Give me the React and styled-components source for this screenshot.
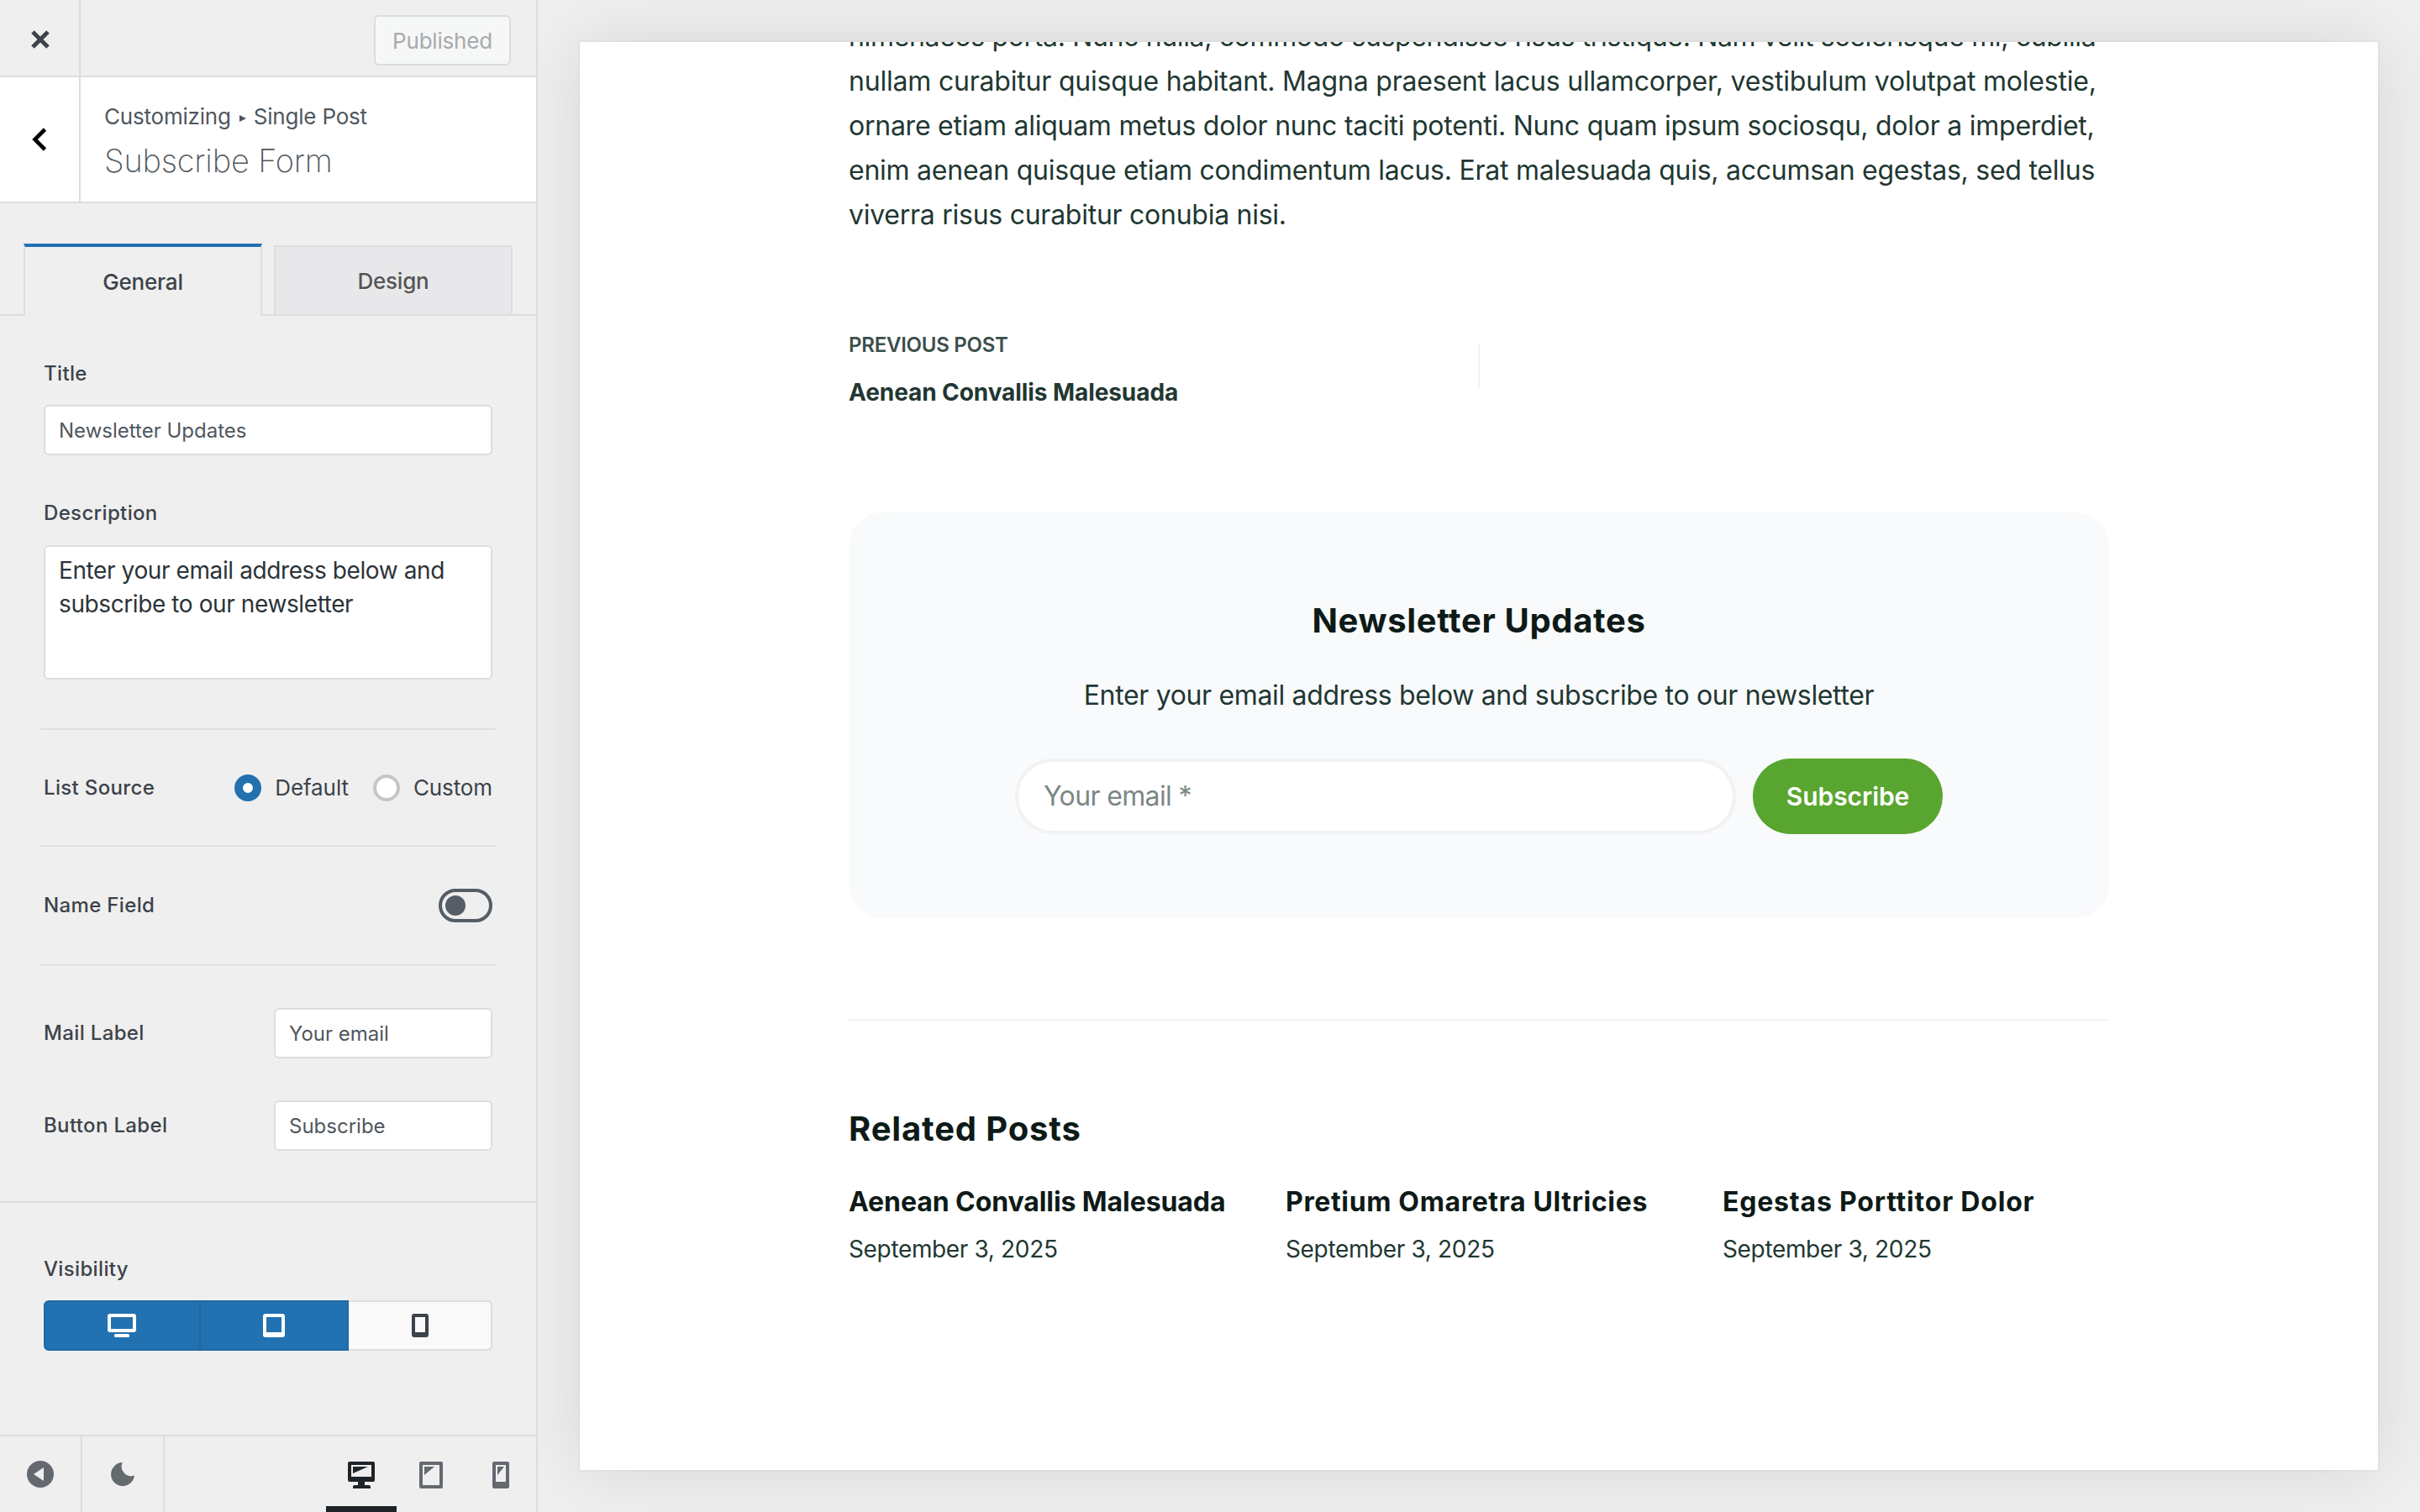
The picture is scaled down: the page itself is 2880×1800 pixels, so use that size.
import React from 'react';
import styled, { createGlobalStyle, css } from 'styled-components';

const GlobalStyle = createGlobalStyle`
  *, *::before, *::after {
    box-sizing: border-box;
  }

  body {
    margin: 0;
    background: #efefef;
    font-family: Inter, "Liberation Sans", sans-serif;
  }

  button, input, textarea {
    font-family: inherit;
  }
`;

const Page = styled.div`
  display: flex;
  width: 2880px;
  height: 1800px;
  overflow: hidden;
`;

/* ---------- Sidebar ---------- */

const Sidebar = styled.aside`
  display: flex;
  flex-direction: column;
  width: 640px;
  flex: none;
  background: #efefef;
  border-right: 2px solid #dddddd;
  position: relative; /* keeps the preview shadow underneath */
  z-index: 1;
`;

const Header = styled.div`
  display: flex;
  justify-content: space-between;
  height: 92px;
  border-bottom: 2px solid #dddddd;
`;

const IconCell = styled.button`
  display: flex;
  align-items: center;
  justify-content: center;
  width: ${(props) => props.$width || 96}px;
  padding: ${(props) => props.$padding || 0};
  border: 0;
  border-right: 2px solid #dddddd;
  background: ${(props) => props.$background || 'transparent'};
`;

const PublishedButton = styled.button`
  width: 163px;
  height: 60px;
  margin: 18px 30px 0 0;
  padding: 0;
  border: 2px solid #dcdcde;
  border-radius: 6px;
  background: #f6f7f7;
  color: #a7aaad;
  font-size: 26px;
  letter-spacing: -0.2px;
`;

const PanelHeader = styled.div`
  display: flex;
  height: 150px;
  background: #fff;
  border-bottom: 2px solid #dddddd;
`;

const PanelTitles = styled.div`
  padding: 29px 0 0 28px;
  color: #50575e;
`;

const Breadcrumb = styled.div`
  display: flex;
  align-items: center;
  font-size: 26px;
  line-height: 36px;
  letter-spacing: -0.2px;

  svg {
    margin: 4px 9px 0 10px;
  }
`;

const PanelTitle = styled.h1`
  margin: 11px 0 0;
  font-size: 38px;
  font-weight: 200;
  line-height: 46px;
  letter-spacing: -0.2px;
`;

const Tabs = styled.div`
  display: flex;
  align-items: flex-end;
  gap: 14px;
  height: 86px;
  margin-top: 48px;
  padding-left: 28px;
  border-bottom: 2px solid #dddddd;
`;

const Tab = styled.button`
  width: 284px;
  height: 82px;
  padding: 0;
  border: 2px solid #dddddd;
  border-bottom: 0;
  background: #e8e8ea;
  color: #555555;
  font-size: 26px;
  font-weight: 500;
  letter-spacing: -0.2px;

  ${(props) => props.$active && css`
    height: 86px;
    margin-bottom: -2px;
    border-top: 4px solid #2271b1;
    background: #efefef;
    color: #3c434a;
  `}
`;

const Options = styled.div`
  padding: 54px 52px 0;
`;

const Label = styled.div`
  color: #3c434a;
  font-size: 24px;
  font-weight: 500;
  line-height: 30px;
  letter-spacing: 0.35px;
`;

const Input = styled.input`
  display: block;
  width: ${(props) => props.$width || '100%'};
  height: 60px;
  margin-top: ${(props) => props.$top || 0}px;
  padding: 0 16px;
  border: 2px solid #dddddd;
  border-radius: 6px;
  background: #fff;
  color: #50575e;
  font-size: 24px;
  outline: none;
`;

const TextArea = styled.textarea`
  display: block;
  width: 100%;
  height: 160px;
  margin-top: 23px;
  padding: 8px 16px;
  border: 2px solid #dddddd;
  border-radius: 6px;
  background: #fff;
  color: #2c3338;
  font-size: 28px;
  line-height: 40px;
  letter-spacing: -0.4px;
  resize: none;
  outline: none;
`;

const Field = styled.div`
  margin-bottom: 54px;
`;

const Divider = styled.div`
  height: 2px;
  margin: 0 -4px;
  background: #e0e0e0;
`;

const FullDivider = styled(Divider)`
  margin: 60px -52px 64px;
  background: #dddddd;
`;

const Rows = styled.div`
  margin-top: 58px;
`;

const Row = styled.div`
  display: flex;
  align-items: center;
  justify-content: space-between;
  height: ${(props) => props.$height}px;
`;

const LabelFields = styled.div`
  display: grid;
  gap: 50px;
  padding-top: 50px;
`;

const Radios = styled.div`
  display: flex;
  gap: 29px;
`;

const RadioOption = styled.div`
  display: flex;
  align-items: center;
  gap: 16px;
  color: #3c434a;
  font-size: 26px;
  line-height: 32px;
  letter-spacing: -0.1px;
`;

const Radio = styled.span`
  width: 32px;
  height: 32px;
  border: ${(props) => (props.$checked ? '10px solid #2271b1' : '4px solid #c3c6c8')};
  border-radius: 50%;
  background: #fff;
`;

const Toggle = styled.div`
  width: 64px;
  height: 40px;
  padding: 4px;
  border: 4px solid #555d66;
  border-radius: 20px;

  &::after {
    content: '';
    display: block;
    width: 24px;
    height: 24px;
    border-radius: 50%;
    background: #555d66;
  }
`;

const ButtonGroup = styled.div`
  display: flex;
  height: 60px;
  margin-top: 22px;
`;

const DeviceButton = styled.button`
  display: flex;
  align-items: center;
  justify-content: center;
  width: ${(props) => props.$width}px;
  padding: 0;
  border: 2px solid #dddddd;
  border-left: 0;
  border-radius: 0 6px 6px 0;
  background: #f9f9f9;
  color: #3c434a;

  ${(props) => props.$active && css`
    border-color: #1f69a4;
    border-radius: 0;
    background: #2271b1;
    color: #fff;
  `}

  &:first-child {
    padding-right: 1px;
    border-left: 2px solid #1f69a4;
    border-radius: 6px 0 0 6px;
  }
`;

const Footer = styled.div`
  display: flex;
  height: 92px;
  margin-top: auto;
  border-top: 2px solid #dddddd;
`;

const Devices = styled.div`
  display: flex;
  margin-left: auto;
`;

const Device = styled.button`
  display: flex;
  align-items: center;
  justify-content: center;
  width: ${(props) => props.$width}px;
  padding: ${(props) => (props.$active ? '9px 0 0' : '2px 0 0')};
  border: 0;
  border-bottom: ${(props) => (props.$active ? '7px solid #1d2327' : 0)};
  background: none;
  color: ${(props) => (props.$active ? '#1d2327' : '#646970')};
`;

/* ---------- Preview ---------- */

const Stage = styled.main`
  flex: 1;
  padding: 50px;
`;

const Preview = styled.div`
  height: 1700px;
  overflow: hidden;
  background: #fff;
  box-shadow: 0 0 0 2px rgba(0, 0, 0, 0.025), 0 0 80px rgba(0, 0, 0, 0.1);
`;

const Content = styled.div`
  width: 1500px;
  margin: -33px auto 0 320px;
`;

const Paragraph = styled.p`
  margin: 0;
  color: #213732;
  font-size: 32px;
  line-height: 53px;
  white-space: nowrap;
`;

const Line = styled.span`
  display: block;
  letter-spacing: ${(props) => props.$spacing}px;
`;

const PostNav = styled.nav`
  display: grid;
  grid-template-columns: 749px 2px 1fr;
  margin-top: 109px;
`;

const NavLabel = styled.div`
  color: #3c4f4b;
  font-size: 24px;
  font-weight: 600;
  line-height: 40px;
  letter-spacing: -0.25px;
`;

const NavTitle = styled.div`
  margin-top: 14px;
  color: #213732;
  font-size: 28px;
  font-weight: 700;
  line-height: 44px;
  letter-spacing: -0.08px;
`;

const NavDivider = styled.div`
  height: 54px;
  margin-top: 18px;
  background: #f1f2f2;
`;

const SubscribeBox = styled.section`
  height: 483px;
  margin-top: 121px;
  padding-top: 104px;
  border-radius: 40px;
  background: #f9fafc;
  text-align: center;
`;

const Heading = styled.h2`
  margin: 0;
  color: #0e1a17;
  font-size: 40px;
  font-weight: 700;
  line-height: 50px;
  letter-spacing: ${(props) => props.$spacing}px;
`;

const Description = styled.p`
  margin: 37px 0 0;
  color: #213732;
  font-size: 32px;
  line-height: 53px;
  letter-spacing: -0.34px;
`;

const Form = styled.div`
  display: flex;
  justify-content: center;
  gap: 20px;
  height: 90px;
  margin-top: 49px;
`;

const EmailInput = styled.input`
  width: 858px;
  padding: 0 30px 1px;
  border: 4px solid #f1f2f3;
  border-radius: 45px;
  background: #fff;
  font-size: 32px;
  letter-spacing: -0.65px;
  outline: none;

  &::placeholder {
    color: #7b8784;
    opacity: 1;
  }
`;

const SubscribeButton = styled.button`
  width: 226px;
  padding: 0 0 1px;
  border: 0;
  border-radius: 45px;
  background: #58a62f;
  color: #fff;
  font-size: 30px;
  font-weight: 600;
  letter-spacing: -0.05px;
`;

const Related = styled.section`
  margin-top: 120px;
  padding-top: 104px;
  border-top: 2px solid #f1f2f2;
`;

const RelatedGrid = styled.div`
  display: grid;
  grid-template-columns: repeat(3, 460px);
  gap: 60px;
  margin-top: 40px;
`;

const PostTitle = styled.h3`
  margin: 0;
  color: #0e1a17;
  font-size: 32px;
  font-weight: 700;
  line-height: 44px;
  letter-spacing: ${(props) => props.$spacing}px;
  white-space: nowrap;
`;

const PostDate = styled.div`
  margin-top: 14px;
  color: #213732;
  font-size: 28px;
  line-height: 40px;
  letter-spacing: -0.35px;
`;

/* ---------- Icons ---------- */

const CloseIcon = () => (
  <svg width="22" height="22" viewBox="0 0 22 22" fill="none" stroke="#3c434a" strokeWidth="5">
    <path d="M2 2 20 20M20 2 2 20" />
  </svg>
);

const BackIcon = () => (
  <svg width="18" height="28" viewBox="0 0 18 28" fill="none" stroke="#000" strokeWidth="4.6">
    <path d="M15.5 2 3.5 14l12 12" />
  </svg>
);

const ArrowIcon = () => (
  <svg width="8" height="8" viewBox="0 0 8 8" fill="#50575e">
    <path d="M0 0 8 4 0 8z" />
  </svg>
);

const ScreenIcon = () => (
  <svg width="34" height="28" viewBox="0 0 34 28" fill="currentColor" fillRule="evenodd">
    <path d="M3 0h28a3 3 0 0 1 3 3v16a3 3 0 0 1-3 3H3a3 3 0 0 1-3-3V3a3 3 0 0 1 3-3zM4 4v14h26V4z" />
    <rect x="8" y="24" width="18" height="4" rx="1.5" />
  </svg>
);

const TabletIcon = () => (
  <svg width="26" height="28" viewBox="0 0 26 28" fill="currentColor" fillRule="evenodd">
    <path d="M3 0h20a3 3 0 0 1 3 3v22a3 3 0 0 1-3 3H3a3 3 0 0 1-3-3V3a3 3 0 0 1 3-3zM4 4v18h18V4z" />
  </svg>
);

const PhoneIcon = () => (
  <svg width="20" height="28" viewBox="0 0 20 28" fill="currentColor" fillRule="evenodd">
    <path d="M3 0h14a3 3 0 0 1 3 3v22a3 3 0 0 1-3 3H3a3 3 0 0 1-3-3V3a3 3 0 0 1 3-3zM4 4v18h12V4z" />
  </svg>
);

const CollapseIcon = () => (
  <svg width="32" height="32" viewBox="0 0 32 32">
    <circle cx="16" cy="16" r="16" fill="#646970" />
    <path d="M8 16 20 8v16z" fill="#efefef" />
  </svg>
);

const MoonIcon = () => (
  <svg width="28" height="28" viewBox="0 0 28 28" fill="#646b6e">
    <path d="M13.8.1A14 14 0 1 0 28 15.6 11.4 11.4 0 0 1 13.8.1z" />
  </svg>
);

const DesktopPreviewIcon = () => (
  <svg width="32" height="32" viewBox="0 0 32 32" fill="currentColor" fillRule="evenodd">
    <path d="M2 0h28a2 2 0 0 1 2 2v20a2 2 0 0 1-2 2H20v4h5a2 2 0 0 1 2 2v2H6v-2a2 2 0 0 1 2-2h4v-4H2a2 2 0 0 1-2-2V2a2 2 0 0 1 2-2zM4 4v14h24V4z" />
    <path d="M6 6h18L6 14z" />
  </svg>
);

const TabletPreviewIcon = () => (
  <svg width="28" height="32" viewBox="0 0 28 32" fill="currentColor" fillRule="evenodd">
    <path d="M2 0h24a2 2 0 0 1 2 2v28a2 2 0 0 1-2 2H2a2 2 0 0 1-2-2V2a2 2 0 0 1 2-2zM4 4v24h20V4z" />
    <path d="M6 6h12L6 16z" />
  </svg>
);

const PhonePreviewIcon = () => (
  <svg width="20" height="32" viewBox="0 0 20 32" fill="currentColor" fillRule="evenodd">
    <path d="M2 0h16a2 2 0 0 1 2 2v28a2 2 0 0 1-2 2H2a2 2 0 0 1-2-2V2a2 2 0 0 1 2-2zM4 4v20h12V4z" />
    <path d="M6 6h8L6 16z" />
  </svg>
);

const lines = [
  { text: 'himenaeos porta. Nunc nulla, commodo suspendisse risus tristique. Nam velit scelerisque mi, cubilia', spacing: -0.35 },
  { text: 'nullam curabitur quisque habitant. Magna praesent lacus ullamcorper, vestibulum volutpat molestie,', spacing: -0.2 },
  { text: 'ornare etiam aliquam metus dolor nunc taciti potenti. Nunc quam ipsum sociosqu, dolor a imperdiet,', spacing: -0.25 },
  { text: 'enim aenean quisque etiam condimentum lacus. Erat malesuada quis, accumsan egestas, sed tellus', spacing: -0.25 },
  { text: 'viverra risus curabitur conubia nisi.', spacing: -0.26 },
];

const posts = [
  { title: 'Aenean Convallis Malesuada', spacing: -0.08, date: 'September 3, 2025' },
  { title: 'Pretium Omaretra Ultricies', spacing: 0.65, date: 'September 3, 2025' },
  { title: 'Egestas Porttitor Dolor', spacing: 0.8, date: 'September 3, 2025' },
];

const OptionRows = () => (
  <Rows>
    <Divider />
    <Row $height={137}>
      <Label>List Source</Label>
      <Radios>
        <RadioOption><Radio $checked />Default</RadioOption>
        <RadioOption><Radio />Custom</RadioOption>
      </Radios>
    </Row>
    <Divider />
    <Row $height={140}>
      <Label>Name Field</Label>
      <Toggle />
    </Row>
    <Divider />
    <LabelFields>
      <Row $height={60}>
        <Label>Mail Label</Label>
        <Input $width="260px" defaultValue="Your email" />
      </Row>
      <Row $height={60}>
        <Label>Button Label</Label>
        <Input $width="260px" defaultValue="Subscribe" />
      </Row>
    </LabelFields>
  </Rows>
);

const Customizer = () => (
  <Sidebar>
    <Header>
      <IconCell aria-label="Close" $padding="4px 0 0 2px"><CloseIcon /></IconCell>
      <PublishedButton>Published</PublishedButton>
    </Header>
    <PanelHeader>
      <IconCell aria-label="Back" $background="#fff"><BackIcon /></IconCell>
      <PanelTitles>
        <Breadcrumb>Customizing<ArrowIcon />Single Post</Breadcrumb>
        <PanelTitle>Subscribe Form</PanelTitle>
      </PanelTitles>
    </PanelHeader>
    <Tabs>
      <Tab $active>General</Tab>
      <Tab>Design</Tab>
    </Tabs>
    <Options>
      <Field>
        <Label>Title</Label>
        <Input $top={22} defaultValue="Newsletter Updates" />
      </Field>
      <Field>
        <Label>Description</Label>
        <TextArea defaultValue="Enter your email address below and subscribe to our newsletter" />
      </Field>
      <OptionRows />
      <FullDivider />
      <Label>Visibility</Label>
      <ButtonGroup>
        <DeviceButton $active $width={187}><ScreenIcon /></DeviceButton>
        <DeviceButton $active $width={176}><TabletIcon /></DeviceButton>
        <DeviceButton $width={171}><PhoneIcon /></DeviceButton>
      </ButtonGroup>
    </Options>
    <Footer>
      <IconCell aria-label="Hide controls" $width={98}><CollapseIcon /></IconCell>
      <IconCell aria-label="Dark mode" $width={98}><MoonIcon /></IconCell>
      <Devices>
        <Device $active $width={84}><DesktopPreviewIcon /></Device>
        <Device $width={82}><TabletPreviewIcon /></Device>
        <Device $width={84}><PhonePreviewIcon /></Device>
      </Devices>
    </Footer>
  </Sidebar>
);

const App = () => {
  return (
    <Page>
      <GlobalStyle />
      <Customizer />
      <Stage>
        <Preview>
          <Content>
            <Paragraph>
              {lines.map((line) => (
                <Line key={line.text} $spacing={line.spacing}>{line.text}</Line>
              ))}
            </Paragraph>
            <PostNav>
              <div>
                <NavLabel>PREVIOUS POST</NavLabel>
                <NavTitle>Aenean Convallis Malesuada</NavTitle>
              </div>
              <NavDivider />
            </PostNav>
            <SubscribeBox>
              <Heading $spacing={0.65}>Newsletter Updates</Heading>
              <Description>Enter your email address below and subscribe to our newsletter</Description>
              <Form>
                <EmailInput placeholder="Your email *" />
                <SubscribeButton>Subscribe</SubscribeButton>
              </Form>
            </SubscribeBox>
            <Related>
              <Heading $spacing={0.85}>Related Posts</Heading>
              <RelatedGrid>
                {posts.map((post) => (
                  <div key={post.title}>
                    <PostTitle $spacing={post.spacing}>{post.title}</PostTitle>
                    <PostDate>{post.date}</PostDate>
                  </div>
                ))}
              </RelatedGrid>
            </Related>
          </Content>
        </Preview>
      </Stage>
    </Page>
  );
};

export default App;
